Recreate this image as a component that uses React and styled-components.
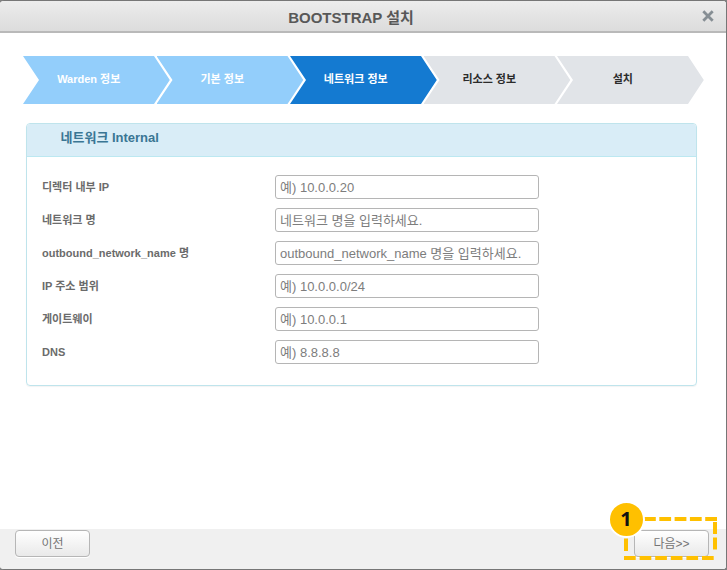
import React from "react";
import styled, { createGlobalStyle } from "styled-components";

const Global = createGlobalStyle`
  * { box-sizing: border-box; }
  body { margin: 0; background: #828282; font-family: "Liberation Sans", "Noto Sans CJK KR", sans-serif; }
`;
const Dialog = styled.div`
  width: 727px; height: 570px; display: flex; flex-direction: column;
  border: 1px solid #767676; border-left: 0;
  border-radius: 4px; background: #fff; overflow: hidden;
`;
const Header = styled.header`
  height: 32px; flex: none; display: flex; align-items: center;
  padding-right: 12px;
  background: linear-gradient(#ececec, #dcdcdc);
  border-bottom: 2px solid #b9b9b9;
`;
const Title = styled.h1`
  flex: 1; margin: 4px 0 0; text-align: center; font-size: 15px; line-height: 20px; color: #585858;
`;
const Close = styled.button`
  border: 0; padding: 0; background: none; display: flex; width: 12px; height: 12px;
`;
const Steps = styled.ol`
  list-style: none; margin: 23px 0 0 23px; padding: 0; display: flex; flex: none;
`;
const tones = {
  done: ["#93cefb", "#fff"],
  active: ["#147ad1", "#fff"],
  next: ["#e1e4e8", "#2b2b2b"],
};
const Step = styled.li`
  width: 147.5px; height: 48px; margin-right: -14px; padding: 0 16px 2px 0;
  display: flex; align-items: center; justify-content: center;
  font-size: 11px; font-weight: bold; line-height: 16px;
  background: ${(p) => tones[p.$tone][0]};
  color: ${(p) => tones[p.$tone][1]};
  clip-path: polygon(0 0, 131px 0, 146.8px 50%, 131px 100%, 0 100%, 16px 50%);
`;
const Panel = styled.section`
  width: 671px; height: 263px; margin: 19px 0 0 26px; flex: none;
  border: 1px solid #bfe4ec; border-radius: 4px; overflow: hidden;
  box-shadow: 0 1px 1px rgba(0, 0, 0, 0.05);
`;
const PanelTitle = styled.h2`
  margin: 0; height: 33px; padding: 4px 0 0 33.5px;
  font-size: 13px; line-height: 19px; color: #3a7694;
  background: #d9edf7; border-bottom: 1px solid #bce8f1;
`;
const Fields = styled.div`
  display: flex; flex-direction: column; gap: 9px; padding: 18px 15px 0;
`;
const Field = styled.label`
  display: grid; grid-template-columns: 233px 264px; align-items: center; height: 24px;
`;
const Label = styled.span`
  font-size: 11px; font-weight: bold; line-height: 16px; color: #6b6b6b;
`;
const Input = styled.input`
  height: 24px; width: 264px; padding: 1px 4px; border: 1px solid #b5b5b5; border-radius: 3px;
  background: #fff; font: 13px "Liberation Sans", "Noto Sans CJK KR", sans-serif;
  &::placeholder { color: #7d7d7d; opacity: 1; }
`;
const Footer = styled.footer`
  margin-top: auto; height: 40px; flex: none; display: flex; justify-content: space-between;
  padding: 1px 17px 0 15px; background: #f0f0f0;
`;
const Button = styled.button`
  width: 75px; height: 27px; padding: 0 0 2px; border: 1px solid #b6b6b6; border-radius: 4px;
  background: linear-gradient(#fff, #e9e9e9); box-shadow: 0 1px 0 #fff;
  color: #747474; font: 12px "Liberation Sans", "Noto Sans CJK KR", sans-serif;
`;
const NextWrap = styled.div`
  position: relative;
`;
const Callout = styled.svg`
  position: absolute; left: -10px; top: -13px; pointer-events: none;
`;
const Badge = styled.span`
  position: absolute; left: -26px; top: -29px; width: 37px; height: 37px; border-radius: 50%;
  border: 2px solid #fff; background: #ffc000; color: #111;
  display: flex; align-items: center; justify-content: center; padding: 0 1px 3px 0;
  font: bold 20px "Noto Sans", sans-serif;
`;

const steps = [
  ["Warden 정보", "done"],
  ["기본 정보", "done"],
  ["네트워크 정보", "active"],
  ["리소스 정보", "next"],
  ["설치", "next"],
];
const fields = [
  ["디렉터 내부 IP", "예) 10.0.0.20"],
  ["네트워크 명", "네트워크 명을 입력하세요."],
  ["outbound_network_name 명", "outbound_network_name 명을 입력하세요."],
  ["IP 주소 범위", "예) 10.0.0.0/24"],
  ["게이트웨이", "예) 10.0.0.1"],
  ["DNS", "예) 8.8.8.8"],
];

export default function App() {
  return (
    <>
      <Global />
      <Dialog>
        <Header>
          <Title>BOOTSTRAP 설치</Title>
          <Close aria-label="닫기">
            <svg width="12" height="12" viewBox="0 0 12 12">
              <path d="M2.3 2.3L9.7 9.7M9.7 2.3L2.3 9.7" stroke="#868e94" strokeWidth="2.8" strokeLinecap="square" />
            </svg>
          </Close>
        </Header>
        <Steps>
          {steps.map(([text, tone]) => <Step key={text} $tone={tone}>{text}</Step>)}
        </Steps>
        <Panel>
          <PanelTitle>네트워크 Internal</PanelTitle>
          <Fields>
            {fields.map(([label, hint]) => (
              <Field key={label}>
                <Label>{label}</Label>
                <Input placeholder={hint} />
              </Field>
            ))}
          </Fields>
        </Panel>
        <Footer>
          <Button>이전</Button>
          <NextWrap>
            <Button>다음&gt;&gt;</Button>
            <Callout width="93" height="43" viewBox="0 0 93 43" fill="none" stroke="#ffc000" strokeWidth="4">
              <path d="M20 2H93" strokeDasharray="11.8 3.5" />
              <path d="M91 5V33" strokeDasharray="12 3.5" />
              <path d="M0 41H91" strokeDasharray="11.7 3.9" />
              <path d="M2 21.5V34" />
            </Callout>
            <Badge>1</Badge>
          </NextWrap>
        </Footer>
      </Dialog>
    </>
  );
}
